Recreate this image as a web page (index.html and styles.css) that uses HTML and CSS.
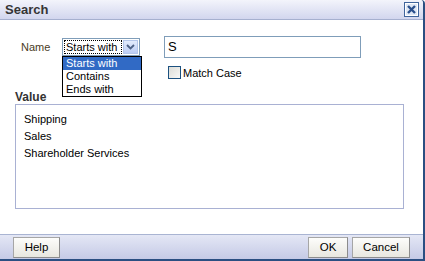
FILE: index.html
```html
<!DOCTYPE html>
<html>
<head>
<meta charset="utf-8">
<link rel="stylesheet" href="styles.css">
</head>
<body>
<div class="dialog">
  <div class="titlebar">
    <span class="title">Search</span>
    <span class="close">
      <svg width="15" height="15" viewBox="0 0 15 15">
        <rect x="0.5" y="0.5" width="14" height="14" fill="#dfe7f5" stroke="#3f649c"/>
        <rect x="1.5" y="1.5" width="12" height="12" fill="none" stroke="#ffffff"/>
        <path d="M4 4 L11 11 M11 4 L4 11" stroke="#2a4f8c" stroke-width="2.4"/>
      </svg>
    </span>
  </div>
  <div class="content">
    <div class="row-name">
      <label class="name-label">Name</label>
      <div class="select-wrap">
        <div class="select">
          <span class="select-text">Starts with</span>
          <span class="select-btn">
            <svg width="9" height="6" viewBox="0 0 9 6"><path d="M1 1 L4.5 4.5 L8 1" fill="none" stroke="#4d6185" stroke-width="1.8"/></svg>
          </span>
        </div>
        <ul class="options">
          <li class="opt active">Starts with</li>
          <li class="opt">Contains</li>
          <li class="opt">Ends with</li>
        </ul>
      </div>
      <div class="text-input">S</div>
    </div>
    <div class="row-check">
      <span class="checkbox"></span>
      <span class="check-label">Match Case</span>
    </div>
    <div class="value-label">Value</div>
    <div class="value-box">
      <div class="value-item">Shipping</div>
      <div class="value-item">Sales</div>
      <div class="value-item">Shareholder Services</div>
    </div>
  </div>
  <div class="footer">
    <button class="btn btn-help">Help</button>
    <div class="spacer"></div>
    <button class="btn btn-ok">OK</button>
    <button class="btn btn-cancel">Cancel</button>
  </div>
</div>
</body>
</html>
```
FILE: styles.css
```css
html, body {
  margin: 0;
  padding: 0;
  background: #ffffff;
}
body {
  width: 425px;
  height: 261px;
  overflow: hidden;
  font-family: "Liberation Sans", Arial, sans-serif;
  font-size: 11px;
  color: #000;
}
.dialog {
  width: 423px;
  height: 259px;
  border-right: 2px solid #2b4f82;
  border-bottom: 2px solid #2b4f82;
  border-top-right-radius: 4px;
  display: flex;
  flex-direction: column;
  background: #fff;
}
.titlebar {
  height: 19px;
  border-bottom: 1px solid #a6b0cf;
  background: linear-gradient(#f3f4fb, #d2d6ee);
  display: flex;
  align-items: center;
  justify-content: space-between;
  padding: 0 4px 0 5px;
  border-top-right-radius: 4px;
}
.title {
  font-weight: bold;
  font-size: 13px;
  color: #353535;
}
.close {
  display: flex;
  width: 15px;
  height: 15px;
}
.content {
  flex: 1;
  display: flex;
  flex-direction: column;
  padding: 16px 0 0 15px;
}
.row-name {
  display: flex;
  align-items: center;
  height: 22px;
}
.name-label {
  width: 47px;
  padding-left: 6px;
  box-sizing: border-box;
  color: #4a3c1e;
}
.select-wrap {
  position: relative;
  width: 78px;
  margin-right: 24px;
}
.select {
  height: 18px;
  box-sizing: border-box;
  border: 1px solid #7f9db9;
  display: flex;
  align-items: center;
  padding: 1px;
}
.select-text {
  flex: 1;
  height: 14px;
  line-height: 14px;
  padding-left: 2px;
  outline: 1px dotted #000;
  outline-offset: -1px;
}
.select-btn {
  width: 15px;
  height: 14px;
  margin-left: 1px;
  background: linear-gradient(#e3ebfc, #bccdf5);
  border: 1px solid #b4c6ea;
  box-sizing: border-box;
  display: flex;
  align-items: center;
  justify-content: center;
}
.options {
  position: absolute;
  left: 0;
  top: 18px;
  width: 80px;
  margin: 0;
  padding: 0;
  list-style: none;
  border: 1px solid #000;
  box-sizing: border-box;
  background: #fff;
}
.opt {
  height: 13px;
  line-height: 13px;
  padding-left: 3px;
}
.opt.active {
  background: #316ac5;
  color: #fff;
}
.text-input {
  width: 197px;
  height: 22px;
  box-sizing: border-box;
  border: 1px solid #7f9db9;
  font-size: 13px;
  line-height: 20px;
  padding-left: 3px;
}
.row-check {
  display: flex;
  align-items: center;
  margin-top: 8px;
  margin-left: 153px;
  height: 13px;
}
.checkbox {
  width: 13px;
  height: 13px;
  box-sizing: border-box;
  border: 1px solid #1c5180;
  background: linear-gradient(135deg, #dcdcd7, #f8f8f6);
  margin-right: 2px;
}
.check-label {
  font-size: 11px;
}
.value-label {
  margin-top: 12px;
  font-weight: bold;
  font-size: 12px;
  color: #333;
  height: 13px;
  line-height: 13px;
}
.value-box {
  width: 389px;
  height: 105px;
  box-sizing: border-box;
  border: 1px solid #a9b1d3;
  padding: 8px 0 0 8px;
}
.value-item {
  height: 17px;
  line-height: 13px;
}
.footer {
  height: 24px;
  border-top: 1px solid #a9b4d2;
  background: linear-gradient(#e4e7f5, #c5cae6);
  display: flex;
  align-items: center;
  padding: 0 13px 0 13px;
}
.spacer {
  flex: 1;
}
.btn {
  font-family: "Liberation Sans", Arial, sans-serif;
  font-size: 11.5px;
  height: 21px;
  border: 1px solid #a6a6a6;
  border-bottom-color: #8c8c8c;
  border-right-color: #8c8c8c;
  background: linear-gradient(#fdfdfb, #e8e7e0);
  padding: 0;
  color: #000;
}
.btn-help { width: 47px; }
.btn-ok { width: 40px; margin-right: 4px; }
.btn-cancel { width: 58px; }
```
